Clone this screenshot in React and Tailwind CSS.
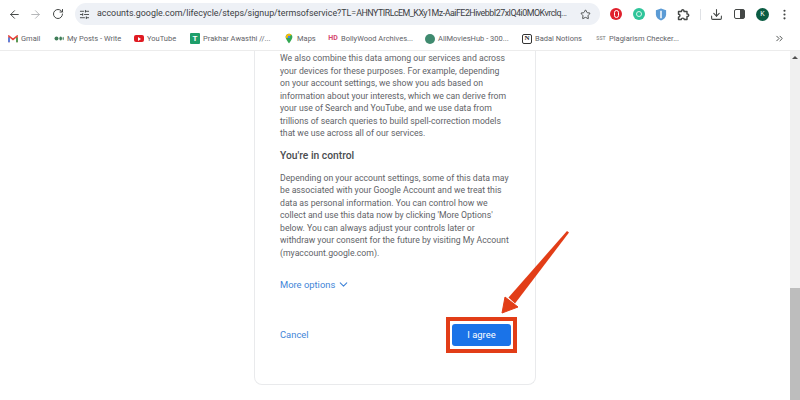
import React from "react";
import { ArrowLeft, ArrowRight, RotateCw, Star, Download, ChevronsRight, EllipsisVertical, SlidersHorizontal, ChevronDown } from "lucide-react";

const Bookmark = ({ icon, label, className }) => (
  <div className={`flex items-center gap-[3px] shrink-0 ${className}`}>
    <div className="w-[10px] h-[12px] flex items-center justify-center shrink-0">{icon}</div>
    <span className="text-[7.5px] text-[#5f6368] whitespace-nowrap">{label}</span>
  </div>
);

const paragraphs = {
  top: [
    "We also combine this data among our services and across",
    "your devices for these purposes. For example, depending",
    "on your account settings, we show you ads based on",
    "information about your interests, which we can derive from",
    "your use of Search and YouTube, and we use data from",
    "trillions of search queries to build spell-correction models",
    "that we use across all of our services.",
  ],
  bottom: [
    "Depending on your account settings, some of this data may",
    "be associated with your Google Account and we treat this",
    "data as personal information. You can control how we",
    "collect and use this data now by clicking 'More Options'",
    "below. You can always adjust your controls later or",
    "withdraw your consent for the future by visiting My Account",
    "(myaccount.google.com).",
  ],
};

const Lines = ({ lines }) => (
  <div className="text-[8.7px] leading-[12.5px] text-[#5f6368]">
    {lines.map((line) => (
      <div key={line} className="whitespace-nowrap">{line}</div>
    ))}
  </div>
);

export default function App() {
  return (
    <div className="relative w-[800px] h-[400px] overflow-hidden bg-white font-['Roboto',sans-serif]">
      {/* toolbar */}
      <div className="h-[27px] flex items-center pl-[8px] pr-[8px] pt-[1px]">
        <ArrowLeft size={13} strokeWidth={1.8} className="text-[#444746] shrink-0" />
        <ArrowRight size={13} strokeWidth={1.8} className="text-[#b4b6b8] ml-[8px] shrink-0" />
        <RotateCw size={12} strokeWidth={2} className="text-[#444746] ml-[10px] shrink-0" />
        <div className="ml-[11px] w-[525px] h-[22px] shrink-0 rounded-full bg-[#eef1f6] flex items-center pl-[4px]">
          <SlidersHorizontal size={11} strokeWidth={2} className="text-[#444746] shrink-0" />
          <span className="ml-[7px] w-[474px] shrink-0 text-[8.9px] text-[#3c4043] whitespace-nowrap">
            accounts.google.com/lifecycle/steps/signup/termsofservice?TL=
            <span className="tracking-[-0.5px]">AHNYTIRLcEM_KXy1Mz-AaiFE2HivebbI27xIQ4i0MOKvrclq...</span>
          </span>
          <Star size={11} strokeWidth={2} className="text-[#444746] shrink-0 ml-[9px]" />
        </div>
        <div className="ml-[10px] w-[12px] h-[12px] rounded-full bg-[#e0202c] flex items-center justify-center shrink-0">
          <div className="w-[5px] h-[8px] rounded-full border-[1.5px] border-white" />
        </div>
        <div className="ml-[11px] w-[12px] h-[12px] rounded-full bg-[#2fc59a] flex items-center justify-center shrink-0">
          <div className="w-[6px] h-[6px] rounded-full border border-[#d8f5ec]" />
        </div>
        <svg viewBox="0 0 12 14" className="ml-[10px] w-[12px] h-[13px] shrink-0">
          <path d="M6 0.5 L11.5 2.5 V7 C11.5 10 9 12.5 6 13.5 C3 12.5 0.5 10 0.5 7 V2.5 Z" fill="#5b9bd5" />
          <path d="M6 3 V11" stroke="#ffffff" strokeWidth="1.6" />
        </svg>
        <svg viewBox="0 0 13 13" fill="none" stroke="#444746" strokeWidth="1.4" strokeLinejoin="round" className="ml-[10px] w-[13px] h-[13px] shrink-0">
          <path d="M1.5 3.5H4.5C4.2 1.2 7.3 1.2 7 3.5H10V6C12.3 5.7 12.3 8.8 10 8.5V11.5H7.2C7.5 9.6 4 9.6 4.3 11.5H1.5V9C3.4 9.3 3.4 5.9 1.5 6.2Z" />
        </svg>
        <div className="ml-[10px] w-px h-[11px] bg-[#dfe1e5] shrink-0" />
        <Download size={13} strokeWidth={2} className="ml-[9px] text-[#444746] shrink-0" />
        <div className="ml-[11px] w-[11px] h-[10px] rounded-[2px] border-[1.5px] border-[#444746] flex justify-end shrink-0">
          <div className="w-[4px] h-full bg-[#444746]" />
        </div>
        <div className="ml-[11px] w-[13px] h-[13px] rounded-full bg-[#0b5c43] flex items-center justify-center text-[7px] text-white shrink-0">K</div>
        <EllipsisVertical size={13} strokeWidth={2} className="ml-[9px] text-[#444746] shrink-0" />
      </div>

      {/* bookmarks */}
      <div className="h-[24px] flex items-center pl-[8px] border-b border-[#ececec] relative">
        <Bookmark
          className="w-[46px]"
          label="Gmail"
          icon={
            <svg viewBox="0 0 12 10" className="w-[10px] h-[8px]">
              <path d="M1 9V1.5L6 5.5L11 1.5V9" fill="none" stroke="#e8453c" strokeWidth="2" />
              <path d="M1 9V3" stroke="#4285f4" strokeWidth="2" />
              <path d="M11 9V3" stroke="#34a853" strokeWidth="2" />
            </svg>
          }
        />
        <Bookmark
          className="w-[80px]"
          label="My Posts - Write"
          icon={
            <svg viewBox="0 0 12 6" className="w-[10px] h-[5px]">
              <circle cx="3" cy="3" r="2.4" fill="#3f7d58" />
              <ellipse cx="8" cy="3" rx="1.6" ry="2.4" fill="#3f7d58" />
              <ellipse cx="11" cy="3" rx="0.7" ry="2" fill="#3f7d58" />
            </svg>
          }
        />
        <Bookmark
          className="w-[56px]"
          label="YouTube"
          icon={
            <div className="w-[10px] h-[7px] rounded-[2px] bg-[#e01b22] flex items-center justify-center">
              <div className="w-0 h-0 border-y-[2px] border-y-transparent border-l-[3px] border-l-white" />
            </div>
          }
        />
        <Bookmark
          className="w-[94px]"
          label="Prakhar Awasthi //..."
          icon={
            <div className="w-[10px] h-[11px] rounded-[1px] bg-[#1e9e6a] flex items-center justify-center text-white text-[8px] font-bold leading-none">
              T
            </div>
          }
        />
        <Bookmark
          className="w-[44px]"
          label="Maps"
          icon={
            <svg viewBox="0 0 10 13" className="w-[8px] h-[11px]">
              <path d="M5 0.5C2.4 0.5 0.8 2.4 0.8 4.6C0.8 7.6 5 12.5 5 12.5C5 12.5 9.2 7.6 9.2 4.6C9.2 2.4 7.6 0.5 5 0.5Z" fill="#34a853" />
              <path d="M1 4C1.5 1.8 3 0.5 5 0.5C6.3 0.5 7.3 1 8 1.8L2 6.5C1.3 5.5 0.9 4.9 1 4Z" fill="#fbbc04" />
              <circle cx="5" cy="4.5" r="1.5" fill="#4285f4" />
            </svg>
          }
        />
        <Bookmark
          className="w-[97px]"
          label="BollyWood Archives..."
          icon={<span className="text-[7px] font-bold text-[#d5486e] leading-none">HD</span>}
        />
        <Bookmark
          className="w-[97px]"
          label="AllMoviesHub - 300..."
          icon={<div className="w-[10px] h-[10px] rounded-full bg-[#3f8a6f]" />}
        />
        <Bookmark
          className="w-[74px]"
          label="Badal Notions"
          icon={
            <div className="w-[10px] h-[10px] rounded-[2px] border border-[#333] flex items-center justify-center text-[7px] font-bold text-[#222] font-['Liberation_Serif',serif] leading-none">
              N
            </div>
          }
        />
        <Bookmark
          label="Plagiarism Checker..."
          icon={<span className="text-[5px] font-bold text-[#9a9a9a] leading-none">SST</span>}
        />
        <ChevronsRight size={11} strokeWidth={2} className="absolute left-[774px] text-[#444746]" />
      </div>

      {/* page */}
      <div className="h-[349px] flex">
        <div className="flex-1 flex flex-col overflow-hidden pl-[254px]">
          <div className="w-[282px] h-[334px] shrink-0 rounded-b-[8px] border border-t-0 border-[#e9eaec] pl-[25px] pt-[1px]">
            <Lines lines={paragraphs.top} />
            <div className="mt-[9px] text-[10.3px] leading-[14px] font-medium text-[#4a4d50]">You're in control</div>
            <div className="mt-[9px]">
              <Lines lines={paragraphs.bottom} />
            </div>
            <div className="mt-[19px] flex items-center gap-[2px] text-[#4285d8] text-[9.4px] leading-[12px]">
              <span>More options</span>
              <ChevronDown size={13} strokeWidth={2} />
            </div>
            <div className="mt-[26px] pr-[25px] flex items-center justify-between">
              <span className="text-[#4285d8] text-[9.4px]">Cancel</span>
              <div className="border-[4px] border-[#e23d17] px-[2px] py-[3px] mr-[-7px]">
                <div className="w-[59px] h-[22px] rounded-[3px] bg-[#1a73e8] text-white text-[9.4px] flex items-center justify-center">
                  I agree
                </div>
              </div>
            </div>
          </div>
        </div>
        <div className="w-[10px] bg-[#f0f0f0] flex flex-col justify-between">
          <div className="h-[12px] flex items-center justify-center">
            <div className="w-0 h-0 border-x-[3px] border-x-transparent border-b-[3px] border-b-[#505050]" />
          </div>
          <div className="h-[112px] bg-[#bdbdbd]" />
        </div>
      </div>

      {/* annotation arrow */}
      <svg viewBox="0 0 800 400" className="absolute inset-0 w-[800px] h-[400px] pointer-events-none">
        <path d="M569 232.5L567 231L508.5 297.5L515 303.5Z" fill="#e23d17" />
        <path d="M502 313L505 297L518 307Z" fill="#e23d17" stroke="#e23d17" strokeWidth="1" strokeLinejoin="round" />
      </svg>
    </div>
  );
}
